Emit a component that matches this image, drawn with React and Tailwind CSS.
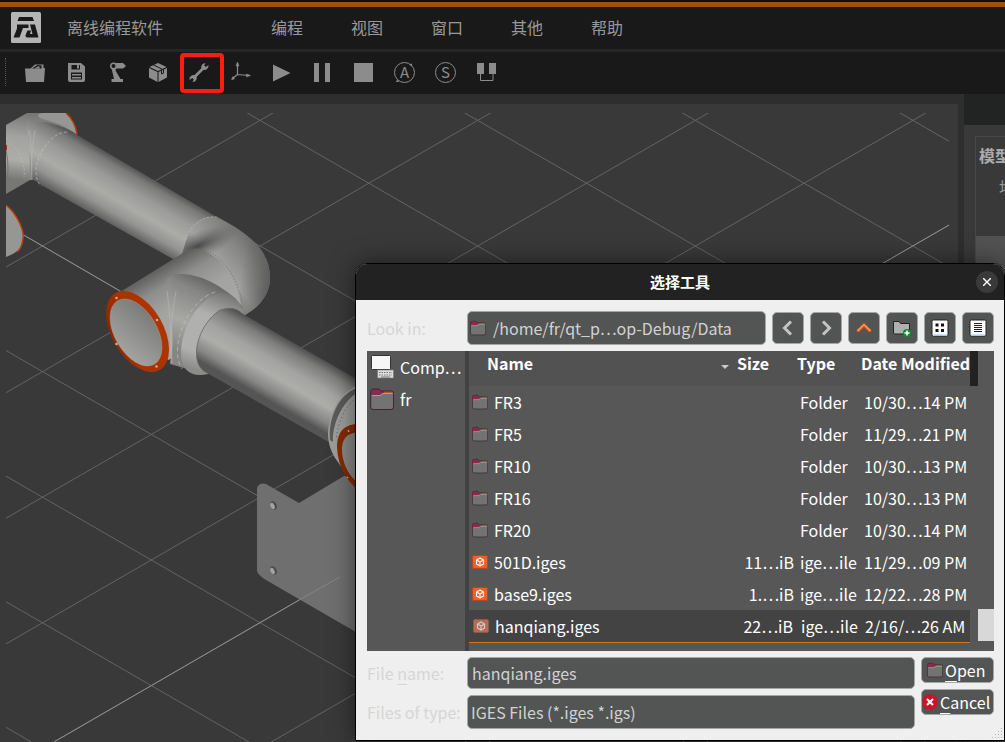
import React from "react";

const menus = ["编程", "视图", "窗口", "其他", "帮助"];

const folders = [
  ["FR3", "10/30…14 PM"],
  ["FR5", "11/29…21 PM"],
  ["FR10", "10/30…13 PM"],
  ["FR16", "10/30…13 PM"],
  ["FR20", "10/30…14 PM"],
];

const files = [
  ["501D.iges", "11…iB", "11/29…09 PM"],
  ["base9.iges", "1.…iB", "12/22…28 PM"],
];

function Logo() {
  return (
    <svg width="30" height="31" viewBox="0 0 30 31" aria-hidden="true">
      <rect width="30" height="31" rx="1.500" fill="#b4b4b4" />
      <path d="M8 5h13.500l1.500 4H6.500z" fill="#191919" />
      <path d="M6 12.500h11.500v3.500h-5.500L8.500 25.500H2.500L6 16.500z" fill="#191919" />
      <path d="M19 12.500h5l3.500 13H16.500c-2 0-2.500-1.500-1.500-3.500l1.500-3.500h3.500l-1 3.500h2.500z" fill="#191919" />
    </svg>
  );
}

function ToolIcon({ name }) {
  const c = "#8c8c8c";
  return (
    <svg width="24" height="24" viewBox="0 0 24 24" fill={c} aria-hidden="true">
      {name === "打开" && (
        <>
          <path d="M2 8.500h5.500L12 4.500h8.500v3.500h1.500L21 22H3z" />
          <path d="M9 8.500l5.500-3.500 4 .5v3" fill="#191919" />
          <path d="M11 8.500l5-2.500 1 2.500z" />
        </>
      )}
      {name === "保存" && (
        <>
          <path d="M4 3h13l4 3.500v13.500a2 2 0 0 1-2 2H6a2 2 0 0 1-2-2z" />
          <path d="M7.500 5h8.500v4.500H7.500zM7 12.500h11v7H7z" fill="#191919" />
          <path d="M13 5h2v3.500h-2zM8 14h9v1.500H8zM8 17h9v1.500H8z" />
        </>
      )}
      {name === "机器人" && (
        <>
          <path d="M8 3h10l3 3-3 2.500h-7l-.5 2 5 8.500H18v3H6.500v-3H9L6.500 8z" />
          <circle cx="8.500" cy="6" r="3.500" />
          <circle cx="8.500" cy="6" r="2" fill="#191919" />
        </>
      )}
      {name === "模型" && (
        <>
          <path d="M3 8l8.500 4v10L3 17.500zM12.500 12L21 8v9.500L12.500 22zM3.500 7L12 3l8.500 4-8.500 4z" />
          <path d="M7.500 5l8.500 4M15.500 10v4l2-1V9" stroke="#191919" strokeWidth="1" fill="none" />
        </>
      )}
      {name === "工具" && (
        <>
          <path d="M6.500 18L17.500 7" stroke={c} strokeWidth="2.600" fill="none" />
          <path d="M21.500 5a4.200 4.200 0 0 1-5.700 4.700L14.300 8.200A4.300 4.300 0 0 1 18.500 3L17.200 5.500l1.600 1.600z" />
          <path d="M2.500 20a4.200 4.200 0 0 1 5.700-4.700l1.500 1.500A4.300 4.300 0 0 1 5.500 22l1.300-2.500-1.600-1.600z" />
        </>
      )}
      {name === "坐标系" && (
        <g fill="none" stroke={c} strokeWidth="1.200">
          <path d="M9.500 3v12M9.500 14.500l12 1M9.500 14.500L4 19" />
          <path d="M8 6L9.500 2 11 6zM18.500 14l4 1.500-4 1.500zM5 16.500L3.500 19.500l3-.5z" fill={c} strokeWidth=".5" />
        </g>
      )}
      {name === "运行" && <path d="M4 4.500v17L21.500 13z" />}
      {name === "暂停" && <path d="M4 3h5v19H4zM15 3h5v19h-5z" />}
      {name === "停止" && <path d="M3 3h19v19H3z" />}
      {name === "回路" && (
        <>
          <path d="M3 3h7v11H3zM15 3h7v11h-7z" />
          <path d="M6.500 14v6.500h12.500V14" fill="none" stroke={c} />
        </>
      )}
      {(name === "自动" || name === "单步") && (
        <>
          <circle cx="12.500" cy="12.500" r="10" fill="none" stroke={c} />
          {name === "自动" && (
            <path d="M5 19.500l2 2.500-3 0zM17 4.500l3-1 0 3z" />
          )}
          <text
            x="12.500"
            y="18"
            textAnchor="middle"
            fontSize="15"
            fontFamily="'Noto Sans CJK SC', sans-serif"
          >
            {name === "自动" ? "A" : "S"}
          </text>
        </>
      )}
    </svg>
  );
}

const tools = ["打开", "保存", "机器人", "模型", "工具", "坐标系", "运行", "暂停", "停止", "自动", "单步", "回路"];

function Scene() {
  const offsets = [];
  for (let k = -8; k <= 10; k++) offsets.push(k);
  const slope = 0.5772;
  return (
    <svg className="block h-full w-full" role="img" aria-label="机器人三维视图">
      <defs>
        <clipPath id="view">
          <rect x="6" y="113" width="943" height="640" />
        </clipPath>
        <linearGradient id="upper" gradientUnits="userSpaceOnUse" x1="77" y1="135" x2="46.500" y2="188">
          <stop offset="0" stopColor="#525252" />
          <stop offset=".12" stopColor="#7a7a79" />
          <stop offset=".35" stopColor="#9b9b99" />
          <stop offset=".6" stopColor="#ababa8" />
          <stop offset=".8" stopColor="#949492" />
          <stop offset="1" stopColor="#5c5c5c" />
        </linearGradient>
        <linearGradient id="fore" gradientUnits="userSpaceOnUse" x1="243" y1="314" x2="212" y2="368">
          <stop offset="0" stopColor="#505050" />
          <stop offset=".15" stopColor="#7d7d7c" />
          <stop offset=".4" stopColor="#a3a3a1" />
          <stop offset=".62" stopColor="#adadaa" />
          <stop offset=".85" stopColor="#868685" />
          <stop offset="1" stopColor="#555" />
        </linearGradient>
        <linearGradient id="elbow" gradientUnits="userSpaceOnUse" x1="262" y1="238" x2="214" y2="278">
          <stop offset="0" stopColor="#636362" />
          <stop offset=".4" stopColor="#858583" />
          <stop offset=".8" stopColor="#a2a2a0" />
          <stop offset="1" stopColor="#8c8c8a" />
        </linearGradient>
        <linearGradient id="elbowEdge" gradientUnits="userSpaceOnUse" x1="240" y1="280" x2="270" y2="284">
          <stop offset="0" stopColor="#646464" stopOpacity="0" />
          <stop offset="1" stopColor="#5c5c5c" />
        </linearGradient>
        <radialGradient id="crease" gradientUnits="userSpaceOnUse" cx="0" cy="0" r="1" gradientTransform="translate(198 246) rotate(-24) scale(46 14)">
          <stop offset="0" stopColor="#444" stopOpacity=".95" />
          <stop offset="1" stopColor="#666" stopOpacity="0" />
        </radialGradient>
        <linearGradient id="stub" gradientUnits="userSpaceOnUse" x1="155" y1="270" x2="187" y2="325">
          <stop offset="0" stopColor="#5e5e5d" />
          <stop offset=".3" stopColor="#8e8e8c" />
          <stop offset=".65" stopColor="#a3a3a1" />
          <stop offset="1" stopColor="#a6a6a4" />
        </linearGradient>
        <linearGradient id="branch" gradientUnits="userSpaceOnUse" x1="212" y1="276" x2="176" y2="350">
          <stop offset="0" stopColor="#5b5b5b" />
          <stop offset=".25" stopColor="#868684" />
          <stop offset=".65" stopColor="#a8a8a5" />
          <stop offset="1" stopColor="#858583" />
        </linearGradient>
        <linearGradient id="collar" gradientUnits="userSpaceOnUse" x1="232" y1="292" x2="200" y2="372">
          <stop offset="0" stopColor="#6e6e6e" />
          <stop offset=".35" stopColor="#b0b0af" />
          <stop offset=".8" stopColor="#b0b0af" />
          <stop offset="1" stopColor="#8b8b8a" />
        </linearGradient>
        <linearGradient id="face" x1="0" y1="0" x2=".6" y2="1">
          <stop offset="0" stopColor="#747473" />
          <stop offset="1" stopColor="#a2a2a0" />
        </linearGradient>
        <linearGradient id="ring" x1="0" y1="1" x2=".4" y2="0">
          <stop offset="0" stopColor="#7d2602" />
          <stop offset=".5" stopColor="#a83301" />
          <stop offset="1" stopColor="#ad3500" />
        </linearGradient>
        <linearGradient id="base" gradientUnits="userSpaceOnUse" x1="40" y1="116" x2="30" y2="182">
          <stop offset="0" stopColor="#777776" />
          <stop offset=".35" stopColor="#a2a2a0" />
          <stop offset=".7" stopColor="#adadaa" />
          <stop offset="1" stopColor="#777776" />
        </linearGradient>
      </defs>
      <g transform="translate(0 -104)">
        <g clipPath="url(#view)">
          <g stroke="#646464" strokeWidth="1">
            {offsets.map((k) => (
              <g key={k}>
                <line x1="0" y1={246 - 42.5 * slope + 125.6 * k} x2="960" y2={246 + 917.5 * slope + 125.6 * k} />
                <line x1="0" y1={246 + 42.5 * slope + 125.6 * k} x2="960" y2={246 - 917.5 * slope + 125.6 * k} />
              </g>
            ))}
          </g>
          <path d="M22 234L125 294M54 742L299 600M840 288L949 225" stroke="#8f8f8f" fill="none" />

          {/* base joint */}
          <path d="M6 125L27 113H66C72 119 77 128 77 136L48 186C41 182 34 178 30 180L6 194Z" fill="url(#base)" />
          <path d="M44 113H66C72 119 77 127 76 134C68 127 58 123 46 120C38 118 34 114 44 113Z" fill="#969694" />
          <path d="M66 113Q75 121 77 134" stroke="#b83b05" strokeWidth="1.500" fill="none" />
          <path d="M6 205C14 211 25 228 23 239C22 249 18 252 6 257Z" fill="#969694" />
          <path d="M6 205C14 211 25 228 23 239C22 246 20 250 17 252" stroke="#b83b05" strokeWidth="1.500" fill="none" />
          <path d="M6 145h1v5h-1z" fill="#a33202" />
          <path d="M6 150Q10 168 6 186" stroke="#777" fill="none" />
          <path d="M6 138C20 149 26 167 24 177" stroke="#bcbcbc" strokeWidth=".7" strokeDasharray="2 2" fill="none" />

          {/* upper arm */}
          <path d="M26 122C46 118 71 129 79 136L215 216C230 220 220 248 173 259L43 186C36 181 33 179 31 180Z" fill="url(#upper)" />
          <path d="M29 130Q33 150 31 180M35 130Q31 150 32 180" stroke="#b9b9b7" fill="none" strokeWidth=".5" />
          <path d="M67 132C50 132 36 157 36 170Q36 183 42 186" stroke="#c6c6c6" strokeDasharray="3 2" strokeWidth=".6" fill="none" />

          {/* elbow */}
          <path d="M173 259C186 258 184 240 191 228C198 218 210 214 219 218C252 235 270 252 270 278C270 296 257 309 243 316L180 292Z" fill="url(#elbow)" />
          <path d="M219 218C252 235 270 252 270 278C270 296 257 309 243 316Z" fill="url(#elbowEdge)" />
          <path d="M185 244C188 230 198 218 215 216L252 238L220 270L180 260Z" fill="url(#crease)" />
          <path d="M186 240C189 226 202 215 219 217" stroke="#c6c6c6" strokeDasharray="2 2" strokeWidth=".5" fill="none" />

          {/* wrist body */}
          <path d="M120 292L188 250C213 243 238 276 242 311L240 330L168 360Z" fill="url(#stub)" />
          <path d="M190 249C215 243 239 276 242 304" stroke="#656565" strokeDasharray="1 2" strokeWidth=".8" fill="none" />
          <path d="M166 280C176 266 218 277 243 307L205 374L170 364C178 330 166 305 166 280Z" fill="url(#branch)" />
          <path d="M167 291Q171 320 172 363M176 291Q170 320 171 363" stroke="#bdbdbb" strokeWidth=".5" fill="none" />
          <path d="M215 292C188 300 168 348 182 369" stroke="#c8c8c8" strokeDasharray="4 3" strokeWidth=".6" fill="none" />
          <path d="M243 313C239 298 230 291 217 294C194 303 181 332 181 353C181 370 191 378 208 374Z" fill="url(#collar)" />

          {/* forearm */}
          <path d="M243 314L362 382L370 430L334 445L207 373C188 365 196 326 220 310Q234 305 243 314Z" fill="url(#fore)" />
          <path d="M207 373C188 365 196 326 220 310Q234 305 243 314" stroke="#686867" strokeWidth=".8" fill="none" />

          {/* flange */}
          <ellipse cx="137.500" cy="331.500" rx="44.500" ry="25.800" transform="rotate(60 137.500 331.500)" fill="url(#ring)" />
          <ellipse cx="136" cy="332.500" rx="36.700" ry="21.200" transform="rotate(60 136 332.500)" fill="url(#face)" stroke="#b3a59b" strokeWidth=".4" />
          <g fill="#d0a88f">
            <circle cx="116.500" cy="298" r="1.300" />
            <circle cx="157" cy="320" r="1.300" />
            <circle cx="116.500" cy="344" r="1.300" />
            <circle cx="156.500" cy="366.500" r="1.300" />
          </g>

          {/* mounting plate */}
          <path d="M257 488Q259 482 266 484L299 503L344 476L380 476V646L266 580Q258 575 257 571Z" fill="#6f6f6f" />
          <path d="M299 600L340 577" stroke="#858585" fill="none" />
          {[505.5, 570.5].map((y) => (
            <g key={y}>
              <ellipse cx="273.500" cy={y} rx="3" ry="4.400" transform={`rotate(-25 273.500 ${y})`} fill="#4a4a4a" />
              <ellipse cx="272.500" cy={y + 0.5} rx="2" ry="3.400" transform={`rotate(-25 272.500 ${y + 0.5})`} fill="#a3a3a1" />
            </g>
          ))}

          {/* far joint */}
          <path d="M362 384C340 390 328 414 328 436C330 456 338 460 346 474L380 460Z" fill="#9c9c9a" />
          <path d="M357 388C339 394 328 418 330 440L333 442C332 424 342 402 358 392Z" fill="#5b5b5a" />
          <path d="M356 398C346 406 338 420 336 440" stroke="#555" strokeDasharray="1 3" fill="none" />
          <path d="M362 424C346 423 337 430 337 447C338 468 347 482 362 493Z" fill="#862a02" />
          <path d="M362 433C348 431 341 438 342 452C343 466 350 478 362 486Z" fill="#888886" />
          <path d="M348 430l1 2M347 477l1 1" stroke="#d0a88f" strokeWidth="1.500" />
        </g>
      </g>
    </svg>
  );
}

function FolderIcon({ large }) {
  return (
    <svg className={large ? "h-6 w-6 shrink-0" : "h-4 w-4 shrink-0"} viewBox="0 0 24 24" aria-hidden="true">
      <path d="M1 4a2 2 0 0 1 2-2h6l2 2h10.500a2 2 0 0 1 2 2v4H1z" fill="#c94f30" />
      <path d="M1 4a2 2 0 0 1 2-2h6l2 2h3v5H1z" fill="#8d2850" />
      <path d="M1 8h9l2.500-2H23v14a2 2 0 0 1-2 2H3a2 2 0 0 1-2-2z" fill="#737373" />
      <path d="M2 8.500h8.500L13 6.500h9.500" stroke="#a0a0a0" fill="none" />
      <path d="M.7 4.500A2.500 2.500 0 0 1 3 2h6l2 2h10a2.500 2.500 0 0 1 2.500 2.500V20A2.500 2.500 0 0 1 21 22.500H3A2.500 2.500 0 0 1 .7 20z" fill="none" stroke="#42252e" />
    </svg>
  );
}

function ModelIcon({ faded }) {
  return (
    <svg className="h-4 w-4 shrink-0" viewBox="0 0 16 16" aria-hidden="true">
      <rect x=".5" y="1.500" width="15" height="13" rx="1.500" fill={faded ? "#b86a54" : "#f05f2b"} stroke={faded ? "#8c5a4c" : "#b54822"} />
      <path d="M8 4l3.500 2v4L8 12l-3.500-2V6zM4.500 6L8 8l3.500-2M8 8v4" fill="none" stroke={faded ? "#cfcfcf" : "#fff"} strokeWidth="1.100" />
    </svg>
  );
}

function ComputerIcon() {
  return (
    <svg className="h-6 w-6 shrink-0" viewBox="0 0 24 24" aria-hidden="true">
      <rect x="1.500" y=".5" width="19" height="14" rx="1" fill="#f6f6f6" stroke="#333" />
      <rect x="7.500" y="15" width="16" height="8" fill="#ddddda" stroke="#777" strokeWidth=".6" />
      <path d="M9 17.500h13M9 20h13" stroke="#777" strokeDasharray="1.500 1" />
      <path d="M11 22h9" stroke="#777" />
    </svg>
  );
}

function NavIcon({ name }) {
  return (
    <svg width="18" height="18" viewBox="0 0 18 18" fill="none" aria-hidden="true">
      {name === "Back" && <path d="M12 2.500L5.500 9l6.500 6.500" stroke="#c4c4c4" strokeWidth="3" />}
      {name === "Forward" && <path d="M6 2.500L12.500 9 6 15.500" stroke="#c4c4c4" strokeWidth="3" />}
      {name === "Parent Directory" && (
        <>
          <path d="M2.500 12.500L9 6l6.500 6.500" stroke="#d9561a" strokeWidth="3.200" />
          <path d="M2.500 12L9 5.500l6.500 6.500" stroke="#ffa56b" strokeWidth="1.200" />
        </>
      )}
      {name === "Create New Folder" && (
        <>
          <path d="M.5 2.500h5.500l1.500 2h9v10.500H1.500L.5 14z" fill="#b0b0b0" stroke="#222" />
          <circle cx="14" cy="14" r="4" fill="#118a2f" />
          <path d="M14 11.500v5M11.500 14h5" stroke="#fff" strokeWidth="1.600" />
        </>
      )}
      {name === "List View" && (
        <>
          <rect x="1" y="1" width="16" height="16" rx="1.500" fill="#fff" stroke="#222" />
          <path d="M2 16h14" stroke="#b5dafc" strokeWidth="1.500" />
          <path d="M4.500 4.500h3v3h-3zM10 4.500h3v3h-3zM4.500 10h3v3h-3zM10 10h3v3h-3z" fill="#111" />
        </>
      )}
      {name === "Detail View" && (
        <>
          <rect x="1" y="1" width="16" height="16" rx="1.500" fill="#fff" stroke="#222" />
          <path d="M2 16h14" stroke="#b5dafc" strokeWidth="1.500" />
          <path d="M5 4.500h8M5 6.500h8M5 8.500h8M5 10.500h8M5 12.500h8" stroke="#222" />
        </>
      )}
    </svg>
  );
}

const navButtons = ["Back", "Forward", "Parent Directory", "Create New Folder", "List View", "Detail View"];

function FileTable() {
  return (
    <table className="w-full table-fixed border-collapse text-left">
      <colgroup>
        <col />
        <col className="w-[68px]" />
        <col className="w-16" />
        <col className="w-[109px]" />
      </colgroup>
      <thead>
        <tr className="h-[35px] bg-[#525252] align-top font-bold">
          <th className="pl-[18px] leading-6">
            <div className="flex items-center justify-between">
              Name
              <svg width="8" height="4" viewBox="0 0 8 4" className="mt-2" aria-hidden="true">
                <path d="M0 0h8L4 4z" fill="#c8c8c8" />
              </svg>
            </div>
          </th>
          <th className="pl-2 leading-6">Size</th>
          <th className="leading-6">Type</th>
          <th className="leading-6">Date Modified</th>
        </tr>
      </thead>
      <tbody>
        {folders.map(([name, date]) => (
          <tr key={name} className="h-8">
            <td className="pl-[3px]">
              <div className="flex items-center gap-[6px]">
                <FolderIcon />
                {name}
              </div>
            </td>
            <td />
            <td className="pl-[3px]">Folder</td>
            <td className="pl-[3px]">{date}</td>
          </tr>
        ))}
        {files.map(([name, size, date]) => (
          <tr key={name} className="h-8">
            <td className="pl-[3px]">
              <div className="flex items-center gap-[6px]">
                <ModelIcon />
                {name}
              </div>
            </td>
            <td className="pr-[3px] text-right">{size}</td>
            <td className="pl-[3px]">ige…ile</td>
            <td className="pl-[3px]">{date}</td>
          </tr>
        ))}
        <tr className="h-8 border-b border-[#d9731f] bg-[#434343]">
          <td className="pl-1">
            <div className="flex items-center gap-[6px]">
              <ModelIcon faded />
              hanqiang.iges
            </div>
          </td>
          <td className="pr-1 text-right">22…iB</td>
          <td className="pl-1">ige…ile</td>
          <td className="pl-1">2/16/…26 AM</td>
        </tr>
      </tbody>
    </table>
  );
}

function FileDialog() {
  return (
    <section
      role="dialog"
      aria-labelledby="dialog-title"
      className="absolute top-[263px] left-[355px] w-[650px] overflow-hidden rounded-t-xl border border-black bg-[#efefef] text-base whitespace-nowrap text-white shadow-[0_0_24px_rgba(0,0,0,0.5)]"
    >
      <header className="flex h-9 items-center bg-[#222222] px-[6px]">
        <span className="w-[22px]" />
        <h1 id="dialog-title" className="flex-1 text-center text-[15px] font-bold">选择工具</h1>
        <button type="button" aria-label="Close" className="flex h-[22px] w-[22px] items-center justify-center rounded-full bg-[#3a3a3a]">
          <svg width="8" height="8" viewBox="0 0 8 8" aria-hidden="true">
            <path d="M0 0l8 8M8 0L0 8" stroke="#fff" strokeWidth="1.400" />
          </svg>
        </button>
      </header>

      <div className="flex flex-col gap-[6px] pt-[11px] pr-[10px] pb-[11px] pl-[11px]">
        <div className="flex items-center gap-[6px]">
          <label htmlFor="look-in" className="w-[94px] text-[#d6d6d6]">Look in:</label>
          <div className="grid min-w-0 flex-1 items-center">
            <select
              id="look-in"
              className="col-start-1 row-start-1 h-[34px] w-full appearance-none rounded-[5px] border border-[#a3a8a4] bg-[#525553] pl-[25px] text-[#d2d2d2]"
            >
              <option>/home/fr/qt_p…op-Debug/Data</option>
            </select>
            <span className="pointer-events-none col-start-1 row-start-1 pl-[3px]">
              <FolderIcon />
            </span>
          </div>
          {navButtons.map((name) => (
            <button
              key={name}
              type="button"
              aria-label={name}
              className="flex h-8 w-8 items-center justify-center rounded-[5px] border border-[#a3a8a4] bg-[#525553]"
            >
              <NavIcon name={name} />
            </button>
          ))}
        </div>

        <div className="flex h-[300px] bg-[#575757]">
          <div className="w-[98px] pl-[3px]">
            <button type="button" className="flex h-8 w-full items-center gap-[6px] text-left">
              <ComputerIcon />
              Comp…
            </button>
            <button type="button" className="flex h-8 w-full items-center gap-[6px] text-left">
              <FolderIcon large />
              fr
            </button>
          </div>
          <div className="w-1 bg-[#424242]" />
          <div className="min-w-0 flex-1">
            <FileTable />
          </div>
          <div className="w-2">
            <div className="h-[35px] bg-[#222222]" />
          </div>
          <div className="w-4 pt-[258px]">
            <div className="h-8 bg-[#d8d8d8]" />
          </div>
        </div>

        <div className="flex gap-[6px]">
          <div className="grid flex-1 grid-cols-[94px_1fr] items-center gap-[6px]">
            <label htmlFor="file-name" className="text-[#d6d6d6]">
              File <u className="underline-offset-4">n</u>ame:
            </label>
            <input
              id="file-name"
              defaultValue="hanqiang.iges"
              className="h-8 w-full min-w-0 rounded-[5px] border border-[#a3a8a4] bg-[#525553] px-1 text-[#d2d2d2]"
            />
            <label htmlFor="file-type" className="text-[#d6d6d6]">Files of type:</label>
            <select
              id="file-type"
              className="h-[34px] w-full appearance-none rounded-[5px] border border-[#a3a8a4] bg-[#525553] px-[3px] text-[#d2d2d2]"
            >
              <option>IGES Files (*.iges *.igs)</option>
            </select>
          </div>
          <div className="flex w-[73px] flex-col gap-[6px]">
            <button type="button" className="flex h-[26px] items-center gap-[2px] rounded-[5px] border border-[#a3a8a4] bg-[#525553] pl-[5px]">
              <FolderIcon />
              <span><u className="underline-offset-4">O</u>pen</span>
            </button>
            <button type="button" className="flex h-[26px] items-center gap-[2px] rounded-[5px] border border-[#a3a8a4] bg-[#525553]">
              <svg className="h-4 w-4 shrink-0" viewBox="0 0 16 16" aria-hidden="true">
                <circle cx="8" cy="8" r="8" fill="#c7162b" />
                <path d="M5 5l6 6M11 5l-6 6" stroke="#fff" strokeWidth="2" />
              </svg>
              <span><u className="underline-offset-4">C</u>ancel</span>
            </button>
          </div>
        </div>
      </div>
      <svg width="12" height="12" viewBox="0 0 12 12" className="absolute right-0 bottom-0" fill="#b5b5b5" aria-hidden="true">
        <path d="M9 0h1v1H9zM6 3h1v1H6zM9 3h1v1H9zM3 6h1v1H3zM6 6h1v1H6zM9 6h1v1H9zM0 9h1v1H0zM3 9h1v1H3zM6 9h1v1H6zM9 9h1v1H9z" />
      </svg>
    </section>
  );
}

export default function App() {
  return (
    <div className="relative flex h-screen flex-col overflow-hidden bg-[#2e2e2e] font-['Noto_Sans_CJK_SC','Noto_Sans',sans-serif] text-base text-[#999999]">
      <div className="h-[7px] shrink-0 border-t-2 border-[#101010] bg-[#a3500c]" />
      <header className="flex h-[42px] shrink-0 items-center bg-[#191919] pb-[2px] pl-[11px]">
        <Logo />
        <span className="ml-[26px] w-[180px]">离线编程软件</span>
        <nav className="flex">
          {menus.map((m) => (
            <button key={m} type="button" className="w-20 px-6 whitespace-nowrap">{m}</button>
          ))}
        </nav>
      </header>
      <div className="flex h-[45px] shrink-0 items-center border-t-[3px] border-[#262626] bg-[#181918] pb-[2px] pl-[5px]">
        <div className="mr-2 h-7 w-px border-l border-dotted border-[#555555]" />
        {tools.map((t) => (
          <button key={t} type="button" aria-label={t} className="relative flex h-10 w-[41px] items-center justify-center">
            <ToolIcon name={t} />
            {t === "工具" && (
              <span className="absolute top-px left-[2px] h-10 w-11 rounded-[4px] border-4 border-[#fb1d10]" />
            )}
          </button>
        ))}
      </div>

      <main className="flex min-h-0 flex-1 gap-[6px]">
        <div className="mt-[10px] min-w-0 flex-1 overflow-hidden bg-[#393939]">
          <Scene />
        </div>
        <aside className="w-[41px] overflow-hidden bg-[#393939]">
          <div className="h-[31px] bg-[#212423]" />
          <div className="mt-[11px] ml-[11px] w-[200px] border border-[#484848]">
            <div className="flex h-[99px] flex-col gap-2 pt-[6px] pl-[3px]">
              <h2 className="font-bold text-[#ababab]">模型</h2>
              <span className="pl-5">地</span>
            </div>
            <div className="h-[60px] bg-[#525252]" />
          </div>
        </aside>
      </main>
      <FileDialog />
    </div>
  );
}
